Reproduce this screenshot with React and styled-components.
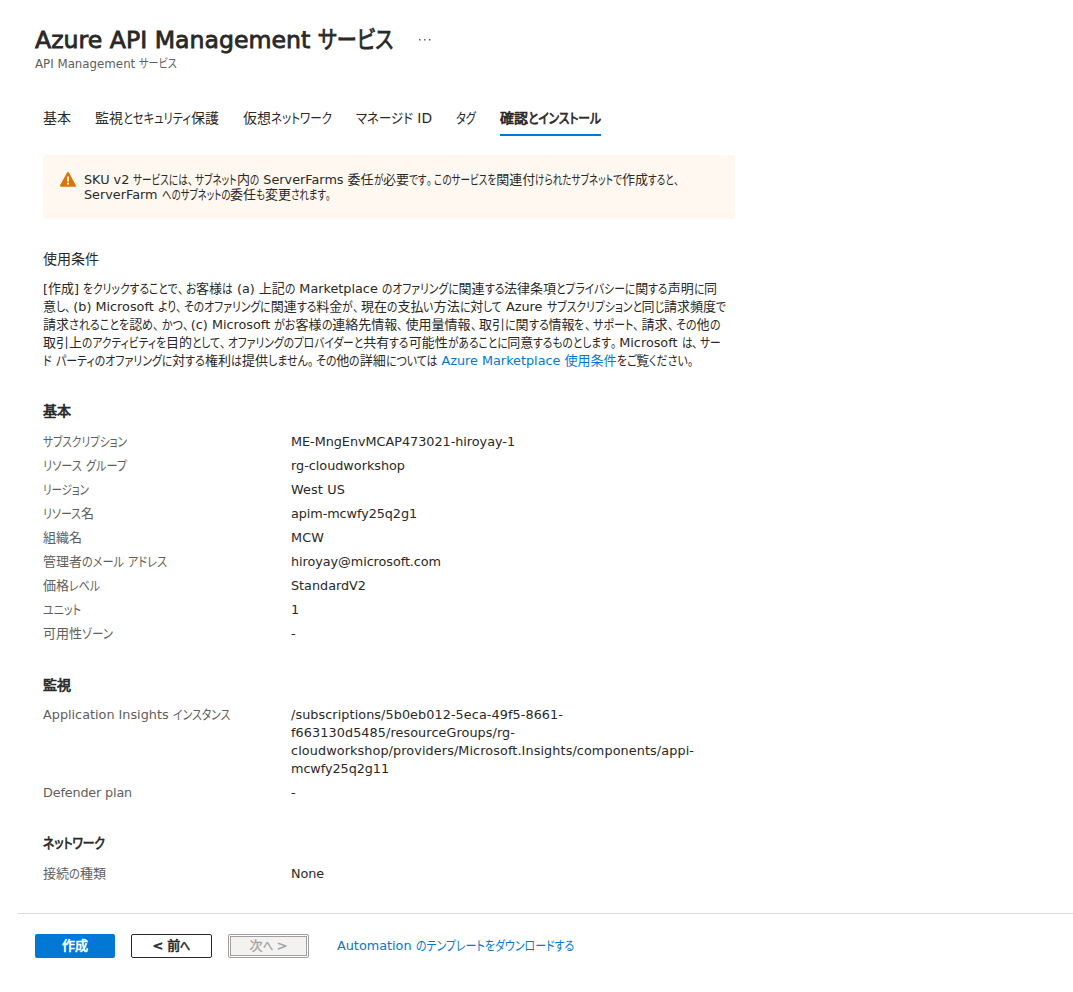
import React, { useLayoutEffect, useRef } from "react";
import styled, { createGlobalStyle } from "styled-components";

const GlobalStyle = createGlobalStyle`
  * { box-sizing: border-box; }
  body {
    margin: 0;
    background: #fff;
    color: #292827;
    font-family: "DejaVu Sans", "Noto Sans CJK JP", sans-serif;
    font-size: 13px;
    line-height: 18px;
  }
`;

/* ---------- text with narrow kana ---------- */

const LineBox = styled.span`
  display: block;
  white-space: pre;
  height: 1lh;
`;

const Latin = styled.span`
  font-size: 0.985em;
`;

const Kanji = styled.span`
  display: inline-block;
  font-family: "Noto Sans CJK JP", sans-serif;
  line-height: 1;
`;

const Kana = styled.span`
  display: inline-block;
  padding-right: ${(p) => (p.$stop ? "0.25em" : "0")};
  font-family: "Noto Sans CJK JP", sans-serif;
  font-feature-settings: "palt";
  line-height: 1;
  transform-origin: 0 50%;
`;

const LinkText = styled.a`
  color: #0078d4;
  text-decoration: none;
`;

const RUNS = /[\u3001\u3002]+|[\u3041-\u30ff]+|[\u3400-\u9fff]+|[^\u3001-\u30ff\u3400-\u9fff]+/g;

function Runs({ text }) {
  return text.match(RUNS).map((run, i) => {
    if (/^[\u3001\u3002]/.test(run)) return <Kana key={i} $stop data-kana="">{run}</Kana>;
    if (/^[\u3041-\u30ff]/.test(run)) return <Kana key={i} data-kana="">{run}</Kana>;
    if (/^[\u3400-\u9fff]/.test(run)) return <Kanji key={i}>{run}</Kanji>;
    return <Latin key={i}>{run}</Latin>;
  });
}

/* Condenses the kana of a line (or the tracking of a Latin line) to a set measure. */
function Line({ width, children }) {
  const ref = useRef(null);
  useLayoutEffect(() => {
    const el = ref.current;
    const kana = [...el.querySelectorAll("[data-kana]")];
    kana.forEach((k) => {
      k.style.transform = "";
      k.style.marginRight = "";
    });
    el.style.letterSpacing = "";
    const range = document.createRange();
    range.selectNodeContents(el);
    const total = range.getBoundingClientRect().width;
    if (kana.length) {
      const widths = kana.map((k) => k.getBoundingClientRect().width);
      const sum = widths.reduce((a, b) => a + b, 0);
      const scale = (width - (total - sum)) / sum;
      kana.forEach((k, i) => {
        k.style.transform = `scaleX(${scale})`;
        k.style.marginRight = `${(scale - 1) * widths[i]}px`;
      });
    } else {
      el.style.letterSpacing = `${(width - total) / el.textContent.length}px`;
    }
  }, [width, children]);
  return (
    <LineBox ref={ref}>
      {typeof children === "string" ? <Runs text={children} /> : children}
    </LineBox>
  );
}

/* ---------- page ---------- */

const Page = styled.main`
  height: 992px;
  overflow: hidden;
  display: flex;
  flex-direction: column;
`;

const Header = styled.header`
  padding: 25px 0 0 35px;
`;

const TitleRow = styled.div`
  display: flex;
  gap: 26px;
  height: 30px;
`;

const Title = styled.h1`
  margin: 0;
  width: 358px;
  font-size: 24px;
  font-weight: 400;
  line-height: 30px;
  -webkit-text-stroke: 0.8px #292827;
`;

const More = styled.svg`
  width: 12px;
  height: 3px;
  margin-top: 13px;
  fill: #605e5c;
`;

const Subtitle = styled.div`
  font-size: 12px;
  line-height: 18px;
  color: #605e5c;
`;

const Tabs = styled.nav`
  display: flex;
  gap: 24px;
  padding: 35px 0 0 43px;
`;

const Tab = styled.div`
  width: ${(p) => p.$width}px;
  height: 28px;
  font-size: 14px;
  line-height: 21px;
  border-bottom: 2px solid ${(p) => (p.$active ? "#0078d4" : "transparent")};
  -webkit-text-stroke: ${(p) => (p.$active ? "0.7px #292827" : "0")};
`;

const Body = styled.div`
  width: 735px;
  padding-left: 43px;
`;

const Banner = styled.div`
  display: flex;
  gap: 8px;
  height: 64px;
  margin-top: 19px;
  padding: 17px 17px 0;
  border-radius: 2px;
  background: #fff8f1;
  line-height: 15px;
`;

const WarningIcon = styled.svg`
  flex: none;
  width: 16px;
  height: 15px;
`;

const Terms = styled.section`
  margin-top: 30px;
`;

const TermsHeading = styled.h2`
  margin: 0 0 10px;
  font-size: 14px;
  font-weight: 400;
  line-height: 21px;
`;

const Section = styled.section`
  margin-top: ${(p) => p.$gap}px;
`;

const SectionHeading = styled.h3`
  margin: 0 0 ${(p) => p.$space}px;
  font-size: 14px;
  font-weight: 400;
  line-height: 21px;
  -webkit-text-stroke: 0.7px #292827;
`;

const Row = styled.div`
  display: grid;
  grid-template-columns: 248px 420px;
  padding: 4px 0 2px;
`;

const Label = styled.div`
  color: #605e5c;
`;

const Value = styled.div``;

const Footer = styled.footer`
  display: flex;
  align-items: center;
  gap: 16px;
  margin: 28px 0 0 18px;
  padding: 20px 0 0 17px;
  border-top: 1px solid #dcdcdc;
`;

const Button = styled.button`
  display: flex;
  align-items: center;
  justify-content: center;
  width: ${(p) => (p.$kind === "primary" ? 80 : 81)}px;
  height: 24px;
  padding: 0;
  font: inherit;
  line-height: 18px;
  border-radius: 2px;
  color: ${(p) => ({ primary: "#fff", normal: "#292827", disabled: "#a19f9d" })[p.$kind]};
  background: ${(p) => ({ primary: "#0078d4", normal: "#fff", disabled: "#f3f2f1" })[p.$kind]};
  border: ${(p) => ({ primary: "0", normal: "1px solid #292827", disabled: "1px solid #a19f9d" })[p.$kind]};
  box-shadow: ${(p) => (p.$kind === "disabled" ? "inset 0 0 0 1px #fff, inset 0 0 0 2px #a19f9d" : "none")};
  -webkit-text-stroke: ${(p) => (p.$kind === "disabled" ? "0.3px" : "0.6px")} currentColor;
`;

const Download = styled(LinkText)`
  margin-left: 12px;
`;

const tabs = [
  ["基本", 28],
  ["監視とセキュリティ保護", 124],
  ["仮想ネットワーク", 89],
  ["マネージド ID", 76],
  ["タグ", 20],
  ["確認とインストール", 101],
];

const sections = [
  {
    title: ["基本", 28],
    gap: 31,
    space: 7,
    rows: [
      [["サブスクリプション", 84], [["ME-MngEnvMCAP473021-hiroyay-1", 224]]],
      [["リソース グループ", 84], [["rg-cloudworkshop", 114]]],
      [["リージョン", 46], [["West US", 54]]],
      [["リソース名", 51], [["apim-mcwfy25q2g1", 126]]],
      [["組織名", 39], [["MCW", 33]]],
      [["管理者のメール アドレス", 124], [["hiroyay@microsoft.com", 150]]],
      [["価格レベル", 57], [["StandardV2", 75]]],
      [["ユニット", 38], [["1", 8]]],
      [["可用性ゾーン", 70], [["-", 5]]],
    ],
  },
  {
    title: ["監視", 28],
    gap: 30,
    space: 6,
    rows: [
      [
        ["Application Insights インスタンス", 187],
        [
          ["/subscriptions/5b0eb012-5eca-49f5-8661-", 272],
          ["f663130d5485/resourceGroups/rg-", 224],
          ["cloudworkshop/providers/Microsoft.Insights/components/appi-", 403],
          ["mcwfy25q2g11", 98],
        ],
      ],
      [["Defender plan", 89], [["-", 5]]],
    ],
  },
  {
    title: ["ネットワーク", 62],
    gap: 29,
    space: 7,
    rows: [[["接続の種類", 63], [["None", 33]]]],
  },
];

export default function App() {
  return (
    <Page>
      <GlobalStyle />
      <Header>
        <TitleRow>
          <Title>
            <Line width={358}>Azure API Management サービス</Line>
          </Title>
          <More viewBox="0 0 12 3">
            <rect x="0" y="1" width="1.5" height="1.5" />
            <rect x="5" y="1" width="1.5" height="1.5" />
            <rect x="10" y="1" width="1.5" height="1.5" />
          </More>
        </TitleRow>
        <Subtitle>
          <Line width={142}>API Management サービス</Line>
        </Subtitle>
      </Header>

      <Tabs>
        {tabs.map(([name, width], i) => (
          <Tab key={name} $width={width} $active={i === 5}>
            <Line width={width}>{name}</Line>
          </Tab>
        ))}
      </Tabs>

      <Body>
        <Banner>
          <WarningIcon viewBox="0 0 16 15">
            <path d="M7.1.6a1 1 0 0 1 1.8 0l6.9 12.6A1 1 0 0 1 15 14.7H1a1 1 0 0 1-.9-1.5z" fill="#db7500" />
            <path d="M7.1 4.5h1.8v5H7.1z" fill="#fff" />
            <circle cx="8" cy="11.7" r="1.1" fill="#fff" />
          </WarningIcon>
          <div>
            <Line width={597}>SKU v2 サービスには、サブネット内の ServerFarms 委任が必要です。このサービスを関連付けられたサブネットで作成すると、</Line>
            <Line width={249}>ServerFarm へのサブネットの委任も変更されます。</Line>
          </div>
        </Banner>

        <Terms>
          <TermsHeading>
            <Line width={56}>使用条件</Line>
          </TermsHeading>
          <Line width={674}>[作成] をクリックすることで、お客様は (a) 上記の Marketplace のオファリングに関連する法律条項とプライバシーに関する声明に同</Line>
          <Line width={683}>意し、(b) Microsoft より、そのオファリングに関連する料金が、現在の支払い方法に対して Azure サブスクリプションと同じ請求頻度で</Line>
          <Line width={677}>請求されることを認め、かつ、(c) Microsoft がお客様の連絡先情報、使用量情報、取引に関する情報を、サポート、請求、その他の</Line>
          <Line width={678}>取引上のアクティビティを目的として、オファリングのプロバイダーと共有する可能性があることに同意するものとします。Microsoft は、サー</Line>
          <Line width={653}>
            <Runs text="ド パーティのオファリングに対する権利は提供しません。その他の詳細については " />
            <LinkText>
              <Runs text="Azure Marketplace 使用条件" />
            </LinkText>
            <Runs text="をご覧ください。" />
          </Line>
        </Terms>

        {sections.map(({ title, gap, space, rows }) => (
          <Section key={title[0]} $gap={gap}>
            <SectionHeading $space={space}>
              <Line width={title[1]}>{title[0]}</Line>
            </SectionHeading>
            {rows.map(([label, lines]) => (
              <Row key={label[0]}>
                <Label>
                  <Line width={label[1]}>{label[0]}</Line>
                </Label>
                <Value>
                  {lines.map(([text, width]) => (
                    <Line key={text} width={width}>{text}</Line>
                  ))}
                </Value>
              </Row>
            ))}
          </Section>
        ))}
      </Body>

      <Footer>
        <Button $kind="primary">
          <Line width={26}>作成</Line>
        </Button>
        <Button $kind="normal">
          <Line width={38}>{"< 前へ"}</Line>
        </Button>
        <Button $kind="disabled" disabled>
          <Line width={38}>{"次へ >"}</Line>
        </Button>
        <Download>
          <Line width={237}>Automation のテンプレートをダウンロードする</Line>
        </Download>
      </Footer>
    </Page>
  );
}
